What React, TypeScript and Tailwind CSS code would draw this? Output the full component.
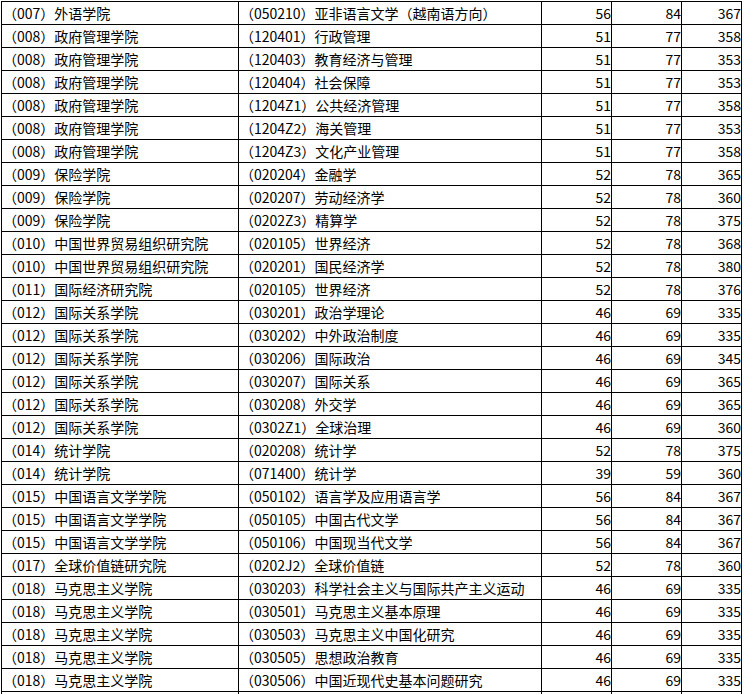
import React from "react";

type Row = {
  school: string;
  major: string;
  a: number | null;
  b: number | null;
  total: number | null;
};

const rows: Row[] = [
  { school: "（007）外语学院", major: "（050210）亚非语言文学（越南语方向）", a: 56, b: 84, total: 367 },
  { school: "（008）政府管理学院", major: "（120401）行政管理", a: 51, b: 77, total: 358 },
  { school: "（008）政府管理学院", major: "（120403）教育经济与管理", a: 51, b: 77, total: 353 },
  { school: "（008）政府管理学院", major: "（120404）社会保障", a: 51, b: 77, total: 353 },
  { school: "（008）政府管理学院", major: "（1204Z1）公共经济管理", a: 51, b: 77, total: 358 },
  { school: "（008）政府管理学院", major: "（1204Z2）海关管理", a: 51, b: 77, total: 353 },
  { school: "（008）政府管理学院", major: "（1204Z3）文化产业管理", a: 51, b: 77, total: 358 },
  { school: "（009）保险学院", major: "（020204）金融学", a: 52, b: 78, total: 365 },
  { school: "（009）保险学院", major: "（020207）劳动经济学", a: 52, b: 78, total: 360 },
  { school: "（009）保险学院", major: "（0202Z3）精算学", a: 52, b: 78, total: 375 },
  { school: "（010）中国世界贸易组织研究院", major: "（020105）世界经济", a: 52, b: 78, total: 368 },
  { school: "（010）中国世界贸易组织研究院", major: "（020201）国民经济学", a: 52, b: 78, total: 380 },
  { school: "（011）国际经济研究院", major: "（020105）世界经济", a: 52, b: 78, total: 376 },
  { school: "（012）国际关系学院", major: "（030201）政治学理论", a: 46, b: 69, total: 335 },
  { school: "（012）国际关系学院", major: "（030202）中外政治制度", a: 46, b: 69, total: 335 },
  { school: "（012）国际关系学院", major: "（030206）国际政治", a: 46, b: 69, total: 345 },
  { school: "（012）国际关系学院", major: "（030207）国际关系", a: 46, b: 69, total: 365 },
  { school: "（012）国际关系学院", major: "（030208）外交学", a: 46, b: 69, total: 365 },
  { school: "（012）国际关系学院", major: "（0302Z1）全球治理", a: 46, b: 69, total: 360 },
  { school: "（014）统计学院", major: "（020208）统计学", a: 52, b: 78, total: 375 },
  { school: "（014）统计学院", major: "（071400）统计学", a: 39, b: 59, total: 360 },
  { school: "（015）中国语言文学学院", major: "（050102）语言学及应用语言学", a: 56, b: 84, total: 367 },
  { school: "（015）中国语言文学学院", major: "（050105）中国古代文学", a: 56, b: 84, total: 367 },
  { school: "（015）中国语言文学学院", major: "（050106）中国现当代文学", a: 56, b: 84, total: 367 },
  { school: "（017）全球价值链研究院", major: "（0202J2）全球价值链", a: 52, b: 78, total: 360 },
  { school: "（018）马克思主义学院", major: "（030203）科学社会主义与国际共产主义运动", a: 46, b: 69, total: 335 },
  { school: "（018）马克思主义学院", major: "（030501）马克思主义基本原理", a: 46, b: 69, total: 335 },
  { school: "（018）马克思主义学院", major: "（030503）马克思主义中国化研究", a: 46, b: 69, total: 335 },
  { school: "（018）马克思主义学院", major: "（030505）思想政治教育", a: 46, b: 69, total: 335 },
  { school: "（018）马克思主义学院", major: "（030506）中国近现代史基本问题研究", a: 46, b: 69, total: 335 },
  // next row starts below the visible area
  { school: "", major: "", a: null, b: null, total: null },
];

const cell = "h-full border-r border-black whitespace-nowrap overflow-hidden";

export default function App() {
  return (
    <div className="w-[744px] h-[694px] overflow-hidden bg-white">
      <div
        className="mt-px ml-px w-[741px] border-l border-t border-black text-[14px] leading-[22px] text-black"
        style={{ fontFamily: '"Noto Sans CJK SC", "Noto Sans", sans-serif' }}
      >
        {rows.map((r, i) => (
          <div key={i} className="flex h-[23px] border-b border-black">
            <div className={`${cell} w-[237px] pl-px`}>{r.school}</div>
            <div className={`${cell} w-[303px] pl-px`}>{r.major}</div>
            <div className={`${cell} w-[70px] text-right`}>{r.a}</div>
            <div className={`${cell} w-[70px] text-right`}>{r.b}</div>
            <div className={`${cell} w-[60px] text-right`}>{r.total}</div>
          </div>
        ))}
      </div>
    </div>
  );
}
